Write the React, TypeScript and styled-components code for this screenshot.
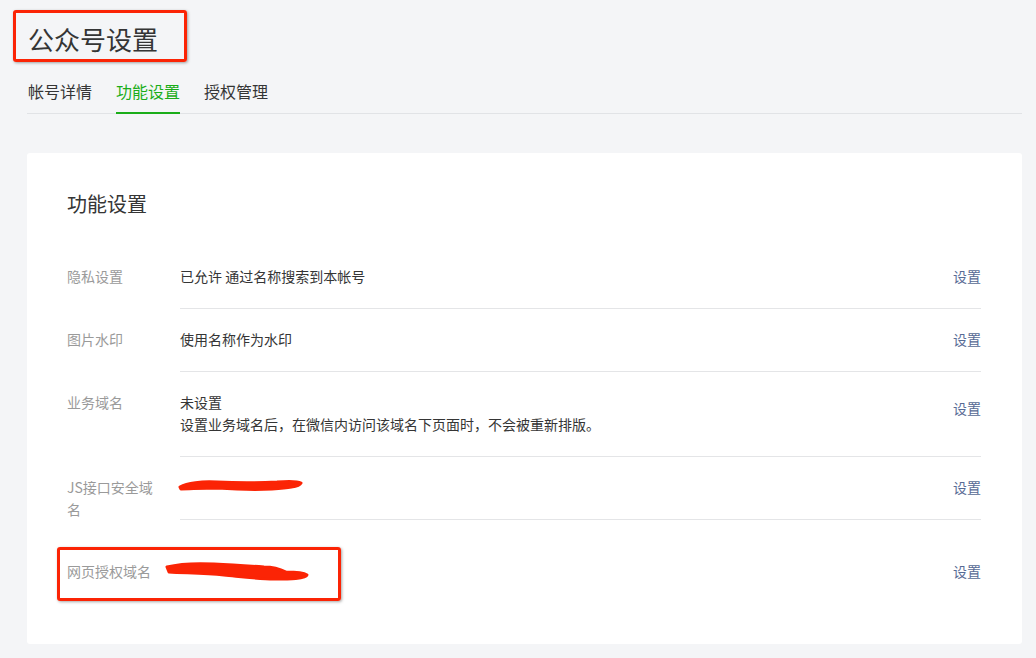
import React from "react";
import styled, { createGlobalStyle } from "styled-components";

const Global = createGlobalStyle`
  html, body { margin: 0; padding: 0; background: #f4f5f7; }
  body { font-family: "Noto Sans CJK SC", "Noto Sans", sans-serif; color: #353535; }
`;

const Page = styled.div`
  padding: 0 14px 16px 27px;
  min-height: 658px;
  box-sizing: border-box;
`;

const TitleWrap = styled.div`
  position: relative;
  display: inline-block;
  padding: 21px 0 0 1px;
`;

const PageTitle = styled.h1`
  margin: 0;
  font-size: 26px;
  font-weight: 400;
  line-height: 36px;
  color: #353535;
`;

const Annotation = styled.div<{ $l: number; $t: number; $w: number; $h: number }>`
  position: absolute;
  left: ${(p) => p.$l}px;
  top: ${(p) => p.$t}px;
  width: ${(p) => p.$w}px;
  height: ${(p) => p.$h}px;
  border: 3px solid #fb2405;
  border-radius: 3px;
  box-sizing: border-box;
  box-shadow: 1px 1px 3px rgba(0, 0, 0, 0.35);
  pointer-events: none;
`;

const Tabs = styled.div`
  display: flex;
  gap: 24px;
  margin-top: 23px;
  padding-left: 1px;
  border-bottom: 1px solid #e1e3e6;
`;

const Tab = styled.div<{ $active?: boolean }>`
  font-size: 16px;
  line-height: 22px;
  padding: 0 0 10px;
  color: ${(p) => (p.$active ? "#1aad19" : "#353535")};
  border-bottom: 2px solid ${(p) => (p.$active ? "#1aad19" : "transparent")};
  margin-bottom: -1px;
`;

const Card = styled.div`
  margin-top: 39px;
  background: #fff;
  border-radius: 3px;
  padding: 37px 41px 40px 40px;
`;

const CardTitle = styled.h2`
  margin: 0 0 28px;
  font-size: 20px;
  font-weight: 400;
  line-height: 28px;
  color: #353535;
`;

const Row = styled.div`
  position: relative;
  display: flex;
  align-items: flex-start;
`;

const Label = styled.div`
  width: 90px;
  margin-right: 23px;
  padding: 19px 0 21px;
  font-size: 14px;
  line-height: 22px;
  color: #9a9a9a;
`;

const Content = styled.div<{ $last?: boolean }>`
  flex: 1;
  display: flex;
  align-items: flex-start;
  justify-content: space-between;
  padding: 19px 0 21px;
  border-bottom: 1px solid ${(p) => (p.$last ? "transparent" : "#e4e5e7")};
`;

const Value = styled.div`
  font-size: 14px;
  line-height: 22px;
  color: #353535;
  min-height: 22px;
  position: relative;
`;

const Link = styled.a<{ $offset?: number }>`
  font-size: 14px;
  line-height: 22px;
  color: #576b95;
  text-decoration: none;
  margin-top: ${(p) => p.$offset ?? 0}px;
  cursor: pointer;
`;

const Scribble = styled.svg`
  position: absolute;
  pointer-events: none;
`;

export default function App() {
  return (
    <>
      <Global />
      <Page>
        <TitleWrap>
          <PageTitle>公众号设置</PageTitle>
          <Annotation $l={-14} $t={10} $w={174} $h={52} />
        </TitleWrap>
        <Tabs>
          <Tab>帐号详情</Tab>
          <Tab $active>功能设置</Tab>
          <Tab>授权管理</Tab>
        </Tabs>
        <Card>
          <CardTitle>功能设置</CardTitle>
          <Row>
            <Label>隐私设置</Label>
            <Content>
              <Value>已允许 通过名称搜索到本帐号</Value>
              <Link>设置</Link>
            </Content>
          </Row>
          <Row>
            <Label>图片水印</Label>
            <Content>
              <Value>使用名称作为水印</Value>
              <Link>设置</Link>
            </Content>
          </Row>
          <Row>
            <Label>业务域名</Label>
            <Content>
              <Value>
                未设置
                <br />
                设置业务域名后，在微信内访问该域名下页面时，不会被重新排版。
              </Value>
              <Link $offset={6}>设置</Link>
            </Content>
          </Row>
          <Row>
            <Label>JS接口安全域名</Label>
            <Content>
              <Value>
                <Scribble
                  width="130"
                  height="20"
                  viewBox="0 0 130 20"
                  style={{ left: -3, top: 1 }}
                >
                  <path
                    d="M3 10 C 10 6, 25 4, 40 5 C 60 6, 80 6, 100 5 C 112 4, 120 4, 124 6 C 122 10, 110 11, 95 12 C 75 13, 55 12, 40 11 C 25 11, 12 12, 4 12 Z"
                    fill="#fb2405"
                    stroke="#fb2405"
                    strokeWidth="3"
                    strokeLinejoin="round"
                  />
                </Scribble>
              </Value>
              <Link>设置</Link>
            </Content>
          </Row>
          <Row>
            <Label>网页授权域名</Label>
            <Content $last>
              <Value>
                <Scribble
                  width="150"
                  height="24"
                  viewBox="0 0 150 24"
                  style={{ left: -16, top: 1 }}
                >
                  <path
                    d="M3 6 C 15 3, 30 2, 50 3 C 70 4, 85 5, 100 6 C 112 6, 118 9, 122 11 C 130 11, 140 12, 143 14 C 142 18, 125 18, 110 18 C 95 18, 80 16, 60 14 C 40 12, 20 12, 5 11 Z"
                    fill="#fb2405"
                    stroke="#fb2405"
                    strokeWidth="3"
                    strokeLinejoin="round"
                  />
                </Scribble>
              </Value>
              <Link>设置</Link>
            </Content>
            <Annotation $l={-10} $t={6} $w={284} $h={54} />
          </Row>
        </Card>
      </Page>
    </>
  );
}
